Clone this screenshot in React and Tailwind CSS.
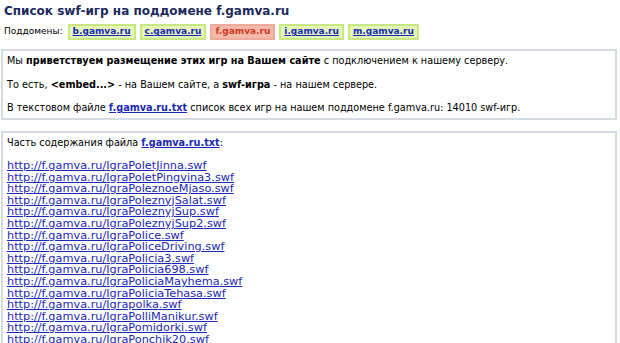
import React from 'react';

const subdomains = [
    { name: 'b.gamva.ru', active: false },
    { name: 'c.gamva.ru', active: false },
    { name: 'f.gamva.ru', active: true },
    { name: 'i.gamva.ru', active: false },
    { name: 'm.gamva.ru', active: false },
];

const games = [
    'IgraPoletJinna', 'IgraPoletPingvina3', 'IgraPoleznoeMjaso', 'IgraPoleznyjSalat',
    'IgraPoleznyjSup', 'IgraPoleznyjSup2', 'IgraPolice', 'IgraPoliceDriving',
    'IgraPolicia3', 'IgraPolicia698', 'IgraPoliciaMayhema', 'IgraPoliciaTehasa',
    'Igrapolka', 'IgraPolliManikur', 'IgraPomidorki', 'IgraPonchik20',
];

const App = () => {
    return (
        <div className="h-[343px] overflow-hidden bg-white pl-[1px] text-[9.7px] text-black font-['DejaVu_Sans',Verdana,sans-serif]">
            <h1 className="pl-[3px] pt-[4px] text-[12px] font-bold leading-[15px] text-[#1c2a5c]">
                Список swf-игр на поддомене f.gamva.ru
            </h1>
            <div className="mt-[5px] flex h-[16px] items-center gap-[4px] pl-[3px] text-[9px]">
                <span className="mr-[1px]">Поддомены:</span>
                {subdomains.map(s => (
                    <a
                        key={s.name}
                        href="#"
                        className={s.active
                            ? 'flex h-[16px] items-center border-2 border-[#eeab9b] bg-[#f4b9aa] px-[3px] font-bold text-[#cc3a22] no-underline'
                            : 'flex h-[16px] items-center border-2 border-[#c8e784] bg-[#e5f7b6] px-[3px] font-bold text-[#1a28b8] underline'}
                    >
                        {s.name}
                    </a>
                ))}
            </div>

            <div className="mt-[9px] w-[616px] border-2 border-[#d6dae2] px-[4px] pt-[3px] pb-[3px]">
                <div className="flex flex-col gap-[9.5px] leading-[14px]">
                    <p>
                        Мы <b>приветствуем размещение этих игр на Вашем сайте</b> с подключением к нашему серверу.
                    </p>
                    <p>
                        То есть, <b>&lt;embed...&gt;</b> - на Вашем сайте, а <b>swf-игра</b> - на нашем сервере.
                    </p>
                    <p>
                        В текстовом файле <a href="#" className="font-bold text-[#1a28b8] underline">f.gamva.ru.txt</a> список всех игр на нашем поддомене f.gamva.ru: 14010 swf-игр.
                    </p>
                </div>
            </div>

            <div className="mt-[11px] w-[616px] border-2 border-b-0 border-[#d6dae2] px-[4px] pt-[3px]">
                <p className="leading-[14px]">
                    Часть содержания файла <a href="#" className="font-bold text-[#1a28b8] underline">f.gamva.ru.txt</a>:
                </p>
                <ul className="mt-[10px] text-[11.3px] leading-[11.6px]">
                    {games.map(g => (
                        <li key={g}>
                            <a href="#" className="text-[#1a28b8] underline">http://f.gamva.ru/{g}.swf</a>
                        </li>
                    ))}
                </ul>
            </div>
        </div>
    );
};

export default App;
